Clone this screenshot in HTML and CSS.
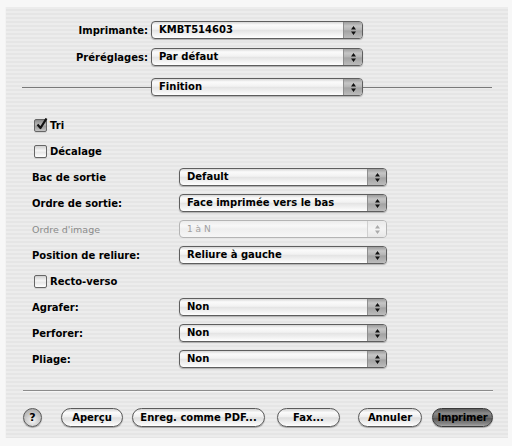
FILE: index.html
```html
<!DOCTYPE html>
<html lang="fr">
<head>
<meta charset="utf-8">
<title>Imprimer</title>
<link rel="stylesheet" href="styles.css">
</head>
<body>
<div class="panel">
  <div class="top">
    <div class="trow">
      <span class="tlabel">Imprimante:</span>
      <div class="popup wide"><span class="val">KMBT514603</span><span class="step"><svg width="7" height="11" viewBox="0 0 7 11"><path d="M3.5 1 L6 4.5 H1 Z M3.5 10 L6 6.5 H1 Z" fill="#111"/></svg></span></div>
    </div>
    <div class="trow">
      <span class="tlabel">Préréglages:</span>
      <div class="popup wide"><span class="val">Par défaut</span><span class="step"><svg width="7" height="11" viewBox="0 0 7 11"><path d="M3.5 1 L6 4.5 H1 Z M3.5 10 L6 6.5 H1 Z" fill="#111"/></svg></span></div>
    </div>
    <div class="trow section">
      <span class="rule left"></span>
      <div class="popup wide"><span class="val">Finition</span><span class="step"><svg width="7" height="11" viewBox="0 0 7 11"><path d="M3.5 1 L6 4.5 H1 Z M3.5 10 L6 6.5 H1 Z" fill="#111"/></svg></span></div>
      <span class="rule right"></span>
    </div>
  </div>

  <div class="opts">
    <div class="row"><span class="check on"><svg width="13" height="13" viewBox="0 0 13 13"><path d="M2.5 6.5 L5.5 10 L11.5 0.5" fill="none" stroke="#111" stroke-width="2.2" stroke-linejoin="round"/></svg></span><span class="clabel">Tri</span></div>
    <div class="row"><span class="check"></span><span class="clabel">Décalage</span></div>
    <div class="row"><span class="label">Bac de sortie</span><div class="popup"><span class="val">Default</span><span class="step"><svg width="7" height="11" viewBox="0 0 7 11"><path d="M3.5 1 L6 4.5 H1 Z M3.5 10 L6 6.5 H1 Z" fill="#111"/></svg></span></div></div>
    <div class="row"><span class="label">Ordre de sortie:</span><div class="popup"><span class="val">Face imprimée vers le bas</span><span class="step"><svg width="7" height="11" viewBox="0 0 7 11"><path d="M3.5 1 L6 4.5 H1 Z M3.5 10 L6 6.5 H1 Z" fill="#111"/></svg></span></div></div>
    <div class="row"><span class="label dis">Ordre d'image</span><div class="popup disabled"><span class="val">1 à N</span><span class="step"><svg width="7" height="11" viewBox="0 0 7 11"><path d="M3.5 1 L6 4.5 H1 Z M3.5 10 L6 6.5 H1 Z" fill="#aaa"/></svg></span></div></div>
    <div class="row"><span class="label">Position de reliure:</span><div class="popup"><span class="val">Reliure à gauche</span><span class="step"><svg width="7" height="11" viewBox="0 0 7 11"><path d="M3.5 1 L6 4.5 H1 Z M3.5 10 L6 6.5 H1 Z" fill="#111"/></svg></span></div></div>
    <div class="row"><span class="check"></span><span class="clabel">Recto-verso</span></div>
    <div class="row"><span class="label">Agrafer:</span><div class="popup"><span class="val">Non</span><span class="step"><svg width="7" height="11" viewBox="0 0 7 11"><path d="M3.5 1 L6 4.5 H1 Z M3.5 10 L6 6.5 H1 Z" fill="#111"/></svg></span></div></div>
    <div class="row"><span class="label">Perforer:</span><div class="popup"><span class="val">Non</span><span class="step"><svg width="7" height="11" viewBox="0 0 7 11"><path d="M3.5 1 L6 4.5 H1 Z M3.5 10 L6 6.5 H1 Z" fill="#111"/></svg></span></div></div>
    <div class="row"><span class="label">Pliage:</span><div class="popup"><span class="val">Non</span><span class="step"><svg width="7" height="11" viewBox="0 0 7 11"><path d="M3.5 1 L6 4.5 H1 Z M3.5 10 L6 6.5 H1 Z" fill="#111"/></svg></span></div></div>
  </div>

  <div class="sep"></div>

  <div class="buttons">
    <span class="help">?</span>
    <span class="btn apercu">Aperçu</span>
    <span class="btn pdf">Enreg. comme PDF...</span>
    <span class="btn fax">Fax...</span>
    <span class="btn annuler">Annuler</span>
    <span class="btn default">Imprimer</span>
  </div>
</div>
</body>
</html>
```

FILE: styles.css
```css
html, body {
  margin: 0;
  padding: 0;
  background: #f7f7f7;
}
body {
  width: 512px;
  height: 446px;
  overflow: hidden;
  font-family: "DejaVu Sans", "Liberation Sans", sans-serif;
  font-size: 10px;
  font-weight: bold;
  color: #000;
}
.panel {
  box-sizing: border-box;
  margin: 7px 0 0 5px;
  width: 503px;
  height: 431px;
  border-left: 1px solid #f3f3f3;
  background: repeating-linear-gradient(to bottom, #ececec 0px, #ececec 2px, #e5e5e5 2px, #e5e5e5 4px);
  padding-top: 14px;
}
.top {
  display: flex;
  flex-direction: column;
  gap: 9px;
}
.trow {
  display: flex;
  align-items: center;
  height: 18px;
}
.tlabel {
  width: 142px;
  text-align: right;
  padding-right: 3px;
}
.trow.section {
  margin-top: 3px;
}
.rule {
  height: 1px;
  background: #7a7a7a;
}
.rule.left {
  margin-left: 16px;
  width: 129px;
}
.rule.right {
  width: 129px;
}
.popup {
  box-sizing: border-box;
  display: flex;
  height: 18px;
  width: 208px;
  border: 1px solid #5e5e5e;
  border-radius: 4px;
  background: linear-gradient(to bottom, #d6d6d6 0%, #fbfbfb 18%, #f2f2f2 45%, #e4e4e4 52%, #f6f6f6 85%, #ffffff 100%);
  box-shadow: 0 1px 1px rgba(0,0,0,0.25);
  overflow: hidden;
}
.popup.wide {
  width: 212px;
}
.val {
  flex: 1;
  padding-left: 7px;
  line-height: 16px;
  white-space: nowrap;
}
.step {
  width: 18px;
  display: flex;
  align-items: center;
  justify-content: center;
  border-left: 1px solid #8e8e8e;
  background: linear-gradient(to bottom, #9c9c9c 0%, #c6c6c6 25%, #b4b4b4 50%, #a2a2a2 55%, #bcbcbc 100%);
}
.popup.disabled {
  border-color: #b4b4b4;
  box-shadow: none;
  background: linear-gradient(to bottom, #ececec 0%, #f8f8f8 30%, #eeeeee 50%, #f6f6f6 100%);
}
.popup.disabled .val {
  color: #a0a0a0;
  font-weight: normal;
  font-size: 9px;
}
.popup.disabled .step {
  border-left-color: #d0d0d0;
  background: linear-gradient(to bottom, #eaeaea, #f4f4f4 50%, #e8e8e8);
}
.opts {
  margin-top: 16px;
  padding-left: 26px;
  display: flex;
  flex-direction: column;
}
.row {
  display: flex;
  align-items: center;
  height: 26px;
}
.label {
  width: 147px;
}
.label.dis {
  color: #8a8a8a;
  font-weight: normal;
  font-size: 9.5px;
}
.check {
  box-sizing: border-box;
  width: 13px;
  height: 13px;
  margin-left: 2px;
  border: 1px solid #666;
  border-radius: 2px;
  background: linear-gradient(to bottom, #cfcfcf, #f8f8f8 45%, #e6e6e6 55%, #ffffff);
  box-shadow: 0 1px 0 rgba(0,0,0,0.1);
  position: relative;
}
.check.on {
  background: linear-gradient(to bottom, #8a8a8a, #b8b8b8 45%, #9a9a9a 55%, #c4c4c4);
}
.check svg {
  position: absolute;
  left: 0;
  top: -2px;
}
.clabel {
  margin-left: 3px;
}
.sep {
  margin: 18px 0 0 17px;
  width: 470px;
  height: 1px;
  background: #8c8c8c;
  box-shadow: 0 1px 0 #f6f6f6;
}
.buttons {
  display: flex;
  align-items: center;
  margin-top: 17px;
  padding-left: 17px;
  height: 19px;
}
.help {
  box-sizing: border-box;
  width: 19px;
  height: 19px;
  border-radius: 50%;
  border: 1px solid #5a5a5a;
  background: radial-gradient(circle at 50% 70%, #f4f4f4, #b8b8b8 70%, #9a9a9a);
  display: flex;
  align-items: center;
  justify-content: center;
  font-size: 11px;
  box-shadow: 0 1px 1px rgba(0,0,0,0.3);
}
.btn {
  box-sizing: border-box;
  height: 19px;
  border: 1px solid #5a5a5a;
  border-radius: 10px;
  background: linear-gradient(to bottom, #d2d2d2 0%, #fbfbfb 20%, #f0f0f0 45%, #dedede 52%, #f4f4f4 85%, #ffffff 100%);
  box-shadow: 0 1px 1px rgba(0,0,0,0.3);
  display: flex;
  align-items: center;
  justify-content: center;
  white-space: nowrap;
}
.apercu { width: 62px; margin-left: 19px; }
.pdf { width: 133px; margin-left: 9px; }
.fax { width: 63px; margin-left: 12px; }
.annuler { width: 64px; margin-left: 18px; }
.default {
  width: 61px;
  margin-left: 10px;
  border-color: #3a3a3a;
  background: linear-gradient(to bottom, #5e5e5e 0%, #8a8a8a 25%, #6e6e6e 50%, #5a5a5a 55%, #8c8c8c 90%, #a8a8a8 100%);
  letter-spacing: -0.2px;
}
```
